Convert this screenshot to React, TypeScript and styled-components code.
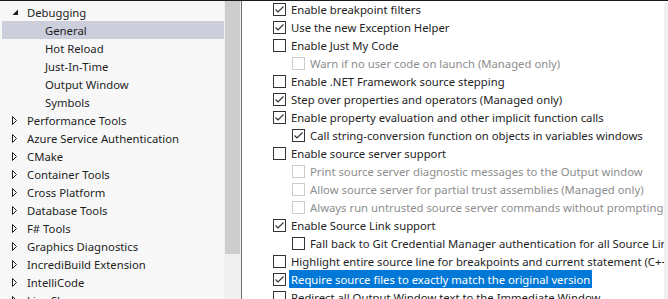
import React from "react";
import styled, { createGlobalStyle } from "styled-components";

const GlobalStyle = createGlobalStyle`
  html, body {
    margin: 0;
    padding: 0;
    background: #ffffff;
  }
  body {
    font-family: "Noto Sans", "Open Sans", sans-serif;
    font-size: 11.3px;
    color: #1e1e1e;
  }
`;

const Window = styled.div`
  width: 668px;
  height: 299px;
  overflow: hidden;
  display: flex;
  border-top: 1px solid #1a1a1a;
  box-sizing: border-box;
  background: #ffffff;
`;

const TreePane = styled.div`
  width: 241px;
  flex: none;
  display: flex;
  border-right: 1px solid #6e6e6e;
  background: #f7f7f7;
`;

const TreeList = styled.div`
  flex: 1;
  min-width: 0;
  padding: 2px 0 0 2px;
  overflow: hidden;
`;

const TreeRow = styled.div<{ $depth: number; $selected?: boolean }>`
  height: 18px;
  display: flex;
  align-items: center;
  padding-left: ${(p) => 6 + p.$depth * 18}px;
  background: ${(p) => (p.$selected ? "#cccedb" : "transparent")};
  white-space: nowrap;
`;

const Expander = styled.span`
  width: 19px;
  height: 18px;
  flex: none;
  display: flex;
`;

const ScrollTrack = styled.div`
  width: 17px;
  flex: none;
  background: #f0f0f0;
  display: flex;
  flex-direction: column;
  padding: 0 1px;
  box-sizing: border-box;
`;

const ScrollThumb = styled.div`
  height: 253px;
  background: #cdcdcd;
`;

const OptionsPane = styled.div`
  flex: 1;
  min-width: 0;
  display: flex;
  background: #ffffff;
`;

const OptionsList = styled.div`
  flex: 1;
  min-width: 0;
  margin-top: -1px;
  padding-left: 31px;
  overflow: hidden;
`;

const RightStrip = styled.div`
  width: 4px;
  flex: none;
  margin-top: 2px;
  background: #f0f0f0;
`;

const OptionRow = styled.div<{ $indent: number }>`
  height: 18px;
  display: flex;
  align-items: center;
  padding-left: ${(p) => p.$indent * 19}px;
  white-space: nowrap;
`;

const Box = styled.span<{ $disabled?: boolean }>`
  width: 13px;
  height: 13px;
  box-sizing: border-box;
  flex: none;
  border: 1px solid ${(p) => (p.$disabled ? "#cccccc" : "#333333")};
  background: #ffffff;
  display: flex;
  margin-right: 3px;
`;

const Label = styled.span<{ $disabled?: boolean; $highlight?: boolean }>`
  display: inline-flex;
  align-items: center;
  height: 18px;
  padding: 0 2px;
  color: ${(p) => (p.$disabled ? "#8d8d8d" : p.$highlight ? "#ffffff" : "#1e1e1e")};
  background: ${(p) => (p.$highlight ? "#0078d7" : "transparent")};
`;

type TreeItem = { label: string; depth: number; state?: "open" | "closed"; selected?: boolean };

const tree: TreeItem[] = [
  { label: "Debugging", depth: 0, state: "open" },
  { label: "General", depth: 1, selected: true },
  { label: "Hot Reload", depth: 1 },
  { label: "Just-In-Time", depth: 1 },
  { label: "Output Window", depth: 1 },
  { label: "Symbols", depth: 1 },
  { label: "Performance Tools", depth: 0, state: "closed" },
  { label: "Azure Service Authentication", depth: 0, state: "closed" },
  { label: "CMake", depth: 0, state: "closed" },
  { label: "Container Tools", depth: 0, state: "closed" },
  { label: "Cross Platform", depth: 0, state: "closed" },
  { label: "Database Tools", depth: 0, state: "closed" },
  { label: "F# Tools", depth: 0, state: "closed" },
  { label: "Graphics Diagnostics", depth: 0, state: "closed" },
  { label: "IncrediBuild Extension", depth: 0, state: "closed" },
  { label: "IntelliCode", depth: 0, state: "closed" },
  { label: "Live Share", depth: 0, state: "closed" },
];

type Option = { label: string; indent: number; checked?: boolean; disabled?: boolean; highlight?: boolean };

const options: Option[] = [
  { label: "Enable breakpoint filters", indent: 0, checked: true },
  { label: "Use the new Exception Helper", indent: 0, checked: true },
  { label: "Enable Just My Code", indent: 0 },
  { label: "Warn if no user code on launch (Managed only)", indent: 1, disabled: true },
  { label: "Enable .NET Framework source stepping", indent: 0 },
  { label: "Step over properties and operators (Managed only)", indent: 0, checked: true },
  { label: "Enable property evaluation and other implicit function calls", indent: 0, checked: true },
  { label: "Call string-conversion function on objects in variables windows", indent: 1, checked: true },
  { label: "Enable source server support", indent: 0 },
  { label: "Print source server diagnostic messages to the Output window", indent: 1, disabled: true },
  { label: "Allow source server for partial trust assemblies (Managed only)", indent: 1, disabled: true },
  { label: "Always run untrusted source server commands without prompting", indent: 1, disabled: true },
  { label: "Enable Source Link support", indent: 0, checked: true },
  { label: "Fall back to Git Credential Manager authentication for all Source Link requests", indent: 1 },
  { label: "Highlight entire source line for breakpoints and current statement (C++ only)", indent: 0 },
  { label: "Require source files to exactly match the original version", indent: 0, checked: true, highlight: true },
  { label: "Redirect all Output Window text to the Immediate Window", indent: 0 },
];

const Arrow = ({ state }: { state?: "open" | "closed" }) => (
  <Expander>
    {state && (
      <svg width="19" height="18" viewBox="0 0 19 18">
        {state === "open" ? (
          <polygon points="10,6.5 10,12 4.5,12" fill="#1e1e1e" />
        ) : (
          <polygon points="4.5,5.5 4.5,13.5 8.5,9.5" fill="none" stroke="#1e1e1e" strokeWidth="1" />
        )}
      </svg>
    )}
  </Expander>
);

const Check = () => (
  <svg width="11" height="11" viewBox="0 0 11 11">
    <polyline points="1.5,5.5 4,8 9.5,2.5" fill="none" stroke="#333333" strokeWidth="1.2" />
  </svg>
);

const App = () => (
  <>
    <GlobalStyle />
    <Window>
      <TreePane>
        <TreeList>
          {tree.map((t) => (
            <TreeRow key={t.label} $depth={t.depth} $selected={t.selected}>
              <Arrow state={t.state} />
              {t.label}
            </TreeRow>
          ))}
        </TreeList>
        <ScrollTrack>
          <ScrollThumb />
        </ScrollTrack>
      </TreePane>
      <OptionsPane>
        <OptionsList>
          {options.map((o) => (
            <OptionRow key={o.label} $indent={o.indent}>
              <Box $disabled={o.disabled}>{o.checked && <Check />}</Box>
              <Label $disabled={o.disabled} $highlight={o.highlight}>
                {o.label}
              </Label>
            </OptionRow>
          ))}
        </OptionsList>
        <RightStrip />
      </OptionsPane>
    </Window>
  </>
);

export default App;
